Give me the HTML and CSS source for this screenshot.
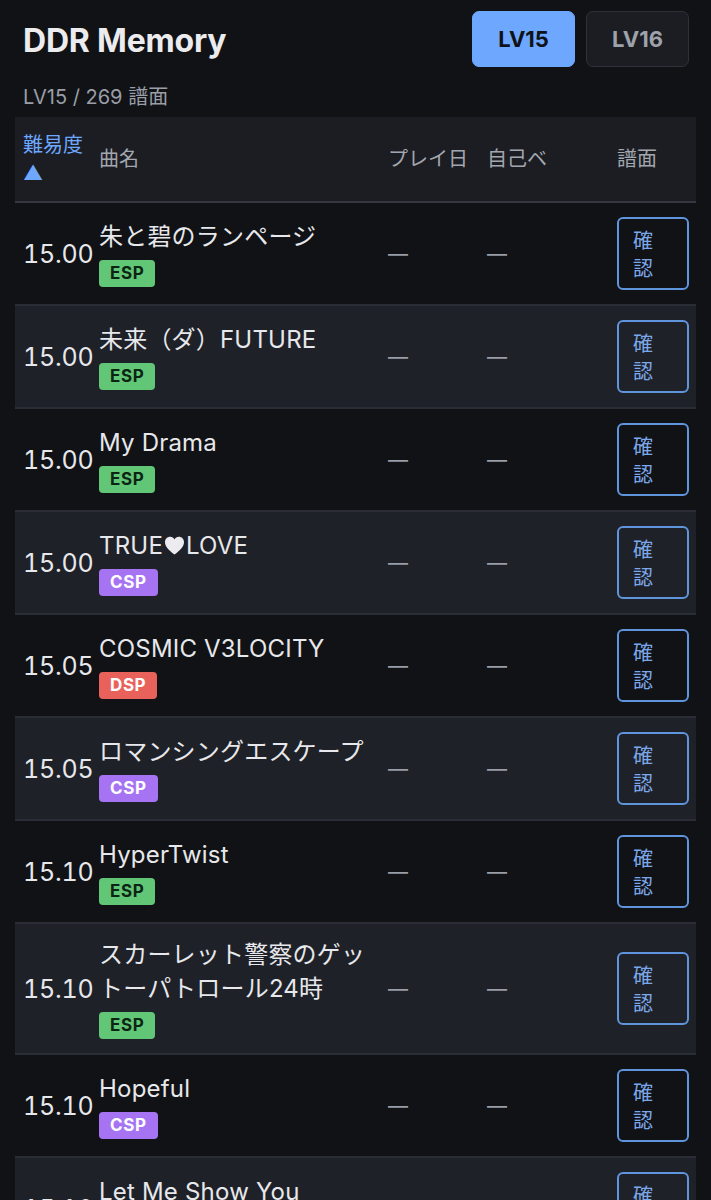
FILE: index.html
```html
<!DOCTYPE html>
<html lang="ja">
<head>
<meta charset="utf-8">
<title>DDR Memory</title>
<link rel="stylesheet" href="styles.css">
</head>
<body>
<div class="page">
  <header class="top">
    <h1 class="title">DDR Memory</h1>
    <div class="levels">
      <button class="lv lv-active">LV15</button>
      <button class="lv">LV16</button>
    </div>
  </header>
  <p class="count">LV15 / 269 譜面</p>
  <table class="charts">
    <colgroup>
      <col class="c-lv"><col class="c-name"><col class="c-date"><col class="c-best"><col class="c-chart">
    </colgroup>
    <thead>
      <tr>
        <th class="sort">難易度 ▲</th>
        <th>曲名</th>
        <th>プレイ日</th>
        <th>自己ベ</th>
        <th>譜面</th>
      </tr>
    </thead>
    <tbody>
      <tr>
        <td class="num">15.00</td>
        <td><div class="song">朱と碧のランページ</div><span class="badge esp">ESP</span></td>
        <td class="dash">—</td><td class="dash">—</td>
        <td><button class="check">確認</button></td>
      </tr>
      <tr>
        <td class="num">15.00</td>
        <td><div class="song">未来（ダ）FUTURE</div><span class="badge esp">ESP</span></td>
        <td class="dash">—</td><td class="dash">—</td>
        <td><button class="check">確認</button></td>
      </tr>
      <tr>
        <td class="num">15.00</td>
        <td><div class="song">My Drama</div><span class="badge esp">ESP</span></td>
        <td class="dash">—</td><td class="dash">—</td>
        <td><button class="check">確認</button></td>
      </tr>
      <tr>
        <td class="num">15.00</td>
        <td><div class="song">TRUE<svg class="heart" viewBox="0 0 24 22" aria-label="♡"><path d="M12 21.5 C5 16 1 12.2 1 7.2 C1 3.6 3.7 1 7 1 C9.2 1 11 2.2 12 4 C13 2.2 14.8 1 17 1 C20.3 1 23 3.6 23 7.2 C23 12.2 19 16 12 21.5 Z"/></svg>LOVE</div><span class="badge csp">CSP</span></td>
        <td class="dash">—</td><td class="dash">—</td>
        <td><button class="check">確認</button></td>
      </tr>
      <tr>
        <td class="num">15.05</td>
        <td><div class="song">COSMIC V3LOCITY</div><span class="badge dsp">DSP</span></td>
        <td class="dash">—</td><td class="dash">—</td>
        <td><button class="check">確認</button></td>
      </tr>
      <tr>
        <td class="num">15.05</td>
        <td><div class="song">ロマンシングエスケープ</div><span class="badge csp">CSP</span></td>
        <td class="dash">—</td><td class="dash">—</td>
        <td><button class="check">確認</button></td>
      </tr>
      <tr>
        <td class="num">15.10</td>
        <td><div class="song">HyperTwist</div><span class="badge esp">ESP</span></td>
        <td class="dash">—</td><td class="dash">—</td>
        <td><button class="check">確認</button></td>
      </tr>
      <tr>
        <td class="num">15.10</td>
        <td><div class="song">スカーレット警察のゲットーパトロール24時</div><span class="badge esp">ESP</span></td>
        <td class="dash">—</td><td class="dash">—</td>
        <td><button class="check">確認</button></td>
      </tr>
      <tr>
        <td class="num">15.10</td>
        <td><div class="song">Hopeful</div><span class="badge csp">CSP</span></td>
        <td class="dash">—</td><td class="dash">—</td>
        <td><button class="check">確認</button></td>
      </tr>
      <tr>
        <td class="num">15.10</td>
        <td><div class="song">Let Me Show You</div><span class="badge esp">ESP</span></td>
        <td class="dash">—</td><td class="dash">—</td>
        <td><button class="check">確認</button></td>
      </tr>
    </tbody>
  </table>
</div>
</body>
</html>
```
FILE: styles.css
```css
html, body {
  margin: 0;
  padding: 0;
  background: #111216;
}
body {
  font-family: "Inter", "Noto Sans CJK JP", sans-serif;
  color: #e7e8eb;
}
.page {
  padding: 0 15px;
}
.top {
  display: flex;
  align-items: center;
  justify-content: space-between;
  padding: 11px 7px 0 8px;
}
.title {
  margin: 0;
  padding-top: 2px;
  font-size: 32px;
  font-weight: 700;
  color: #ececef;
  letter-spacing: -0.2px;
}
.levels {
  display: flex;
  gap: 11px;
}
.lv {
  width: 103px;
  height: 56px;
  border-radius: 7px;
  border: 1px solid #2e3139;
  background: #1b1d23;
  color: #9ea2ab;
  font-family: "Inter", sans-serif;
  font-size: 22px;
  font-weight: 700;
}
.lv-active {
  background: #6ea8fe;
  border-color: #6ea8fe;
  color: #0f1218;
}
.count {
  margin: 16px 0 6px 8px;
  font-size: 20px;
  line-height: 28px;
  color: #9a9ea7;
}
.charts {
  width: 681px;
  border-collapse: collapse;
  table-layout: fixed;
}
.c-lv { width: 76px; }
.c-name { width: 289px; }
.c-date { width: 99px; }
.c-best { width: 130px; }
.c-chart { width: 87px; }
.charts th,
.charts td {
  padding: 14px 4px 14px 8px;
  text-align: left;
  vertical-align: middle;
}
.charts thead tr {
  background: #1b1d23;
  border-bottom: 2px solid #34373f;
}
.charts th {
  font-size: 20px;
  line-height: 28px;
  font-weight: 400;
  color: #a2a6ae;
}
.charts th.sort {
  color: #6ea8fe;
}
.charts tbody tr {
  border-bottom: 2px solid #2a2d35;
}
.charts tbody tr:nth-child(odd) {
  background: #111216;
}
.charts tbody tr:nth-child(even) {
  background: #1f2128;
}
.num {
  font-size: 25px;
  font-variant-numeric: tabular-nums;
  font-feature-settings: "tnum" 1;
  letter-spacing: -0.2px;
  color: #e7e8eb;
  white-space: nowrap;
}
.song {
  font-size: 24px;
  line-height: 34px;
  letter-spacing: 0.2px;
  color: #e7e8eb;
}
.heart {
  width: 21px;
  height: 19px;
  fill: #ececf0;
  margin: 0 1px;
  vertical-align: -1px;
}
.badge {
  display: inline-block;
  margin-top: 6px;
  height: 27px;
  line-height: 27px;
  padding: 0 11px;
  border-radius: 4px;
  font-size: 17px;
  font-weight: 700;
  letter-spacing: 0.6px;
  vertical-align: top;
}
.esp { background: #62c677; color: #0c2413; }
.csp { background: #a674f2; color: #ffffff; }
.dsp { background: #e8625b; color: #ffffff; }
.dash {
  font-size: 20px;
  color: #9a9ea7;
}
.check {
  display: block;
  width: 72px;
  height: 73px;
  padding: 0 16px 0 14px;
  border: 2px solid #5f95dc;
  border-radius: 6px;
  background: transparent;
  color: #7ba8ea;
  font-family: "Noto Sans CJK JP", sans-serif;
  font-size: 20px;
  line-height: 28px;
  text-align: left;
}
```
